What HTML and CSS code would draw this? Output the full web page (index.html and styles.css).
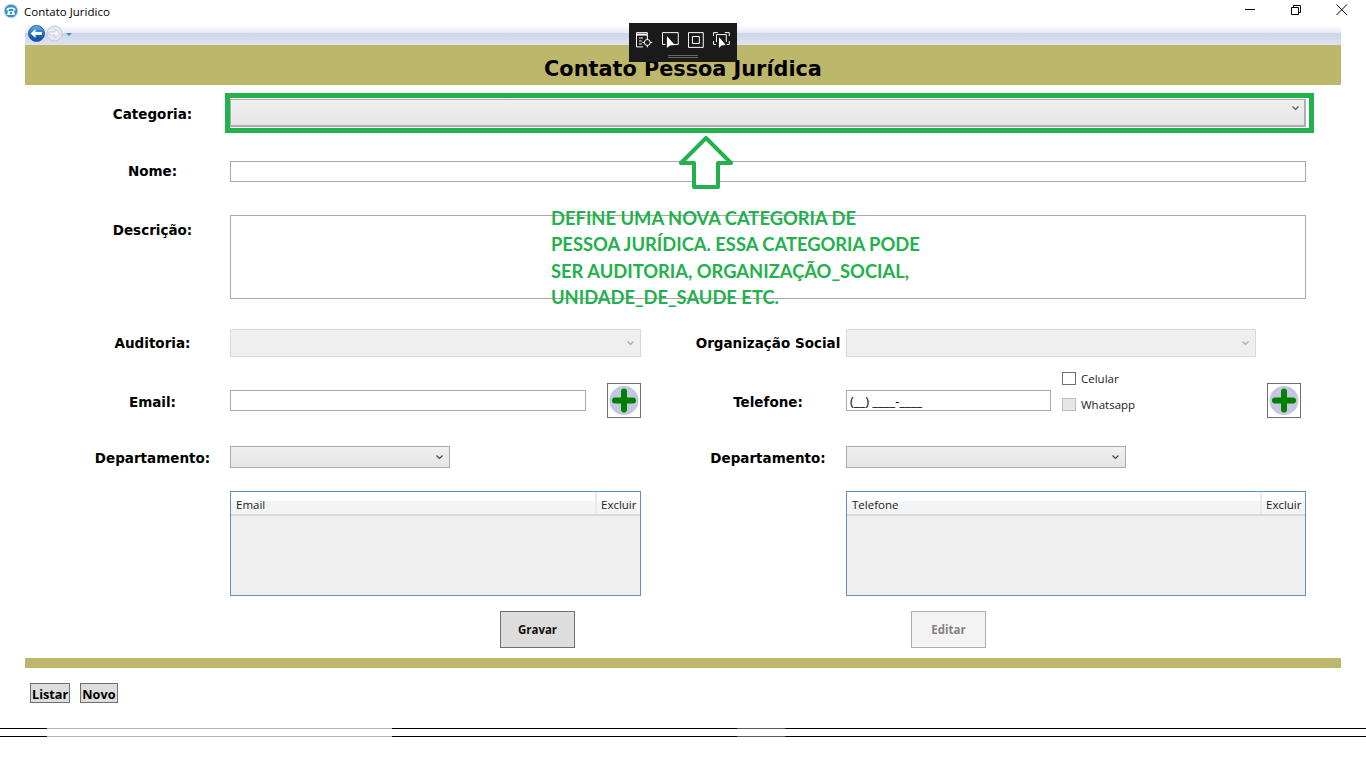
FILE: index.html
```html
<!DOCTYPE html>
<html lang="pt-BR">

<head>
    <meta charset="UTF-8">
    <title>Contato Juridico</title>
    <link rel="stylesheet" href="styles.css">
</head>

<body>
    <div class="titlebar">
        <svg class="app-icon" width="16" height="16" viewBox="0 0 16 16">
            <circle cx="8" cy="8" r="7.5" fill="#d5dde4"/>
            <circle cx="8" cy="8" r="6.3" fill="#2b8fd0"/>
            <path d="M3.5 6.5C4 3.5 12 3.5 12.5 6.5V7.5H10V6H6V7.500H3.500Z" fill="#fff"/>
            <path d="M5 8H11L12 12H4Z" fill="#fff"/>
            <circle cx="8" cy="10" r="1.200" fill="#2b8fd0"/>
        </svg>
        <span class="app-title">Contato Juridico</span>
        <div class="win-buttons">
            <svg width="12" height="12" viewBox="0 0 12 12"><path d="M1 5.500H11" stroke="#000" fill="none"/></svg>
            <svg width="12" height="12" viewBox="0 0 12 12"><path d="M1.500 3.500H8.500V10.500H1.500ZM3.500 3.500V1.500H10.500V8.500H8.500" stroke="#000" fill="none"/></svg>
            <svg width="12" height="12" viewBox="0 0 12 12"><path d="M0.500 0.500L11 11M11 0.500L0.500 11" stroke="#000" fill="none"/></svg>
        </div>
    </div>

    <div class="page">
        <div class="navbar">
            <svg width="48" height="20" viewBox="0 0 48 20">
                <defs>
                    <linearGradient id="backFill" x1="0" y1="0" x2="0" y2="1">
                        <stop offset="0" stop-color="#6bb5ea"/>
                        <stop offset="0.5" stop-color="#1c6fc4"/>
                        <stop offset="1" stop-color="#0a4fa0"/>
                    </linearGradient>
                </defs>
                <circle cx="10.500" cy="8.500" r="8" fill="url(#backFill)" stroke="#2a5f9c"/>
                <path d="M4.500 8.500L9.500 4V7H16V10H9.500V13Z" fill="#fff"/>
                <circle cx="28.500" cy="8.500" r="7.500" fill="#e6e9f2" stroke="#c3c9dc"/>
                <path d="M34 8.500L29 4V7H23V10H29V13Z" fill="#f4f5fa" stroke="#b9c0d4" stroke-width="0.600"/>
                <path d="M40 8H46L43 11Z" fill="#3d8fc4"/>
            </svg>
        </div>

        <h1 class="banner">Contato Pessoa Jurídica</h1>

        <form class="contact-form">
            <div class="row row-categoria">
                <label class="field-label">Categoria:</label>
                <div class="combo combo-main span-all">
                    <svg class="chevron" width="7" height="5" viewBox="0 0 7 5"><path d="M0.500 0.500L3.500 3.500L6.500 0.500" fill="none" stroke="#555" stroke-width="1.200"/></svg>
                </div>
            </div>

            <div class="row row-nome">
                <label class="field-label">Nome:</label>
                <input class="text-input span-all" type="text">
            </div>

            <div class="row row-descricao">
                <label class="field-label label-top">Descrição:</label>
                <textarea class="text-area span-all"></textarea>
            </div>

            <div class="row row-auditoria">
                <label class="field-label">Auditoria:</label>
                <div class="combo combo-off">
                    <svg class="chevron" width="7" height="5" viewBox="0 0 7 5"><path d="M0.500 0.500L3.500 3.500L6.500 0.500" fill="none" stroke="#aaa" stroke-width="1.200"/></svg>
                </div>
                <label class="field-label side-label">Organização Social</label>
                <div class="combo combo-off combo-org">
                    <svg class="chevron" width="7" height="5" viewBox="0 0 7 5"><path d="M0.500 0.500L3.500 3.500L6.500 0.500" fill="none" stroke="#aaa" stroke-width="1.200"/></svg>
                </div>
            </div>

            <div class="row row-contato">
                <label class="field-label label-contato">Email:</label>
                <div class="contact-cell">
                    <input class="text-input email-input" type="text">
                    <button class="add-btn add-email" type="button">
                        <svg width="32" height="33" viewBox="0 0 32 33">
                            <circle cx="16" cy="16.500" r="14.500" fill="#c6c6e2"/>
                            <path d="M7 16.500H25M16 7.500V25.500" stroke="#008000" stroke-width="6" stroke-linecap="round"/>
                        </svg>
                    </button>
                </div>
                <label class="field-label side-label label-contato">Telefone:</label>
                <div class="contact-cell">
                    <input class="text-input phone-input" type="text" value="(__) ____-____">
                    <div class="phone-checks">
                        <label class="check-line"><input class="check" type="checkbox">Celular</label>
                        <label class="check-line"><input class="check check-off" type="checkbox">Whatsapp</label>
                    </div>
                    <button class="add-btn add-phone" type="button">
                        <svg width="32" height="33" viewBox="0 0 32 33">
                            <circle cx="16" cy="16.500" r="14.500" fill="#c6c6e2"/>
                            <path d="M7 16.500H25M16 7.500V25.500" stroke="#008000" stroke-width="6" stroke-linecap="round"/>
                        </svg>
                    </button>
                </div>
            </div>

            <div class="row row-depto">
                <label class="field-label">Departamento:</label>
                <div class="combo combo-depto-left">
                    <svg class="chevron" width="7" height="5" viewBox="0 0 7 5"><path d="M0.500 0.500L3.500 3.500L6.500 0.500" fill="none" stroke="#444" stroke-width="1.200"/></svg>
                </div>
                <label class="field-label side-label">Departamento:</label>
                <div class="combo combo-depto-right">
                    <svg class="chevron" width="7" height="5" viewBox="0 0 7 5"><path d="M0.500 0.500L3.500 3.500L6.500 0.500" fill="none" stroke="#444" stroke-width="1.200"/></svg>
                </div>
            </div>

            <div class="row row-listas">
                <div class="list-box col-left">
                    <div class="list-head">
                        <span class="list-col">Email</span>
                        <span class="list-del">Excluir</span>
                    </div>
                </div>
                <div class="list-box col-right">
                    <div class="list-head">
                        <span class="list-col">Telefone</span>
                        <span class="list-del">Excluir</span>
                    </div>
                </div>
            </div>

            <div class="row row-acoes">
                <div class="col-left">
                    <button class="action-btn btn-gravar" type="button">Gravar</button>
                </div>
                <div class="col-right">
                    <button class="action-btn btn-editar" type="button" disabled>Editar</button>
                </div>
            </div>
        </form>

        <div class="footer-band"></div>

        <div class="page-links">
            <button class="link-btn" type="button">Listar</button>
            <button class="link-btn" type="button">Novo</button>
        </div>
    </div>

    <div class="double-line"></div>

    <!-- coisas desenhadas por cima da tela -->
    <div class="capture-bar">
        <div class="capture-icons">
            <svg width="17" height="16" viewBox="0 0 17 16" fill="none" stroke="#fff">
                <path d="M0.500 15V0.500H11.500V6"/>
                <path d="M0.500 2.500H11.500" stroke-width="2"/>
                <path d="M3 6H7M3 9H6M3 12H6M0.500 15H7"/>
                <circle cx="11.500" cy="10.500" r="3"/>
                <path d="M11.500 5.500V8M11.500 13V15.500M6.500 10.500H9M14 10.500H16.500"/>
            </svg>
            <svg width="17" height="16" viewBox="0 0 17 16" fill="none" stroke="#fff">
                <path d="M3.500 12.500H0.500V0.500H16.500V12.500H12"/>
                <path d="M5 4L5 16L8 13.500L13 13L5 4Z" fill="#fff" stroke="none"/>
            </svg>
            <svg width="17" height="16" viewBox="0 0 17 16" fill="none" stroke="#fff">
                <path d="M0.500 0.500H15.500V15.500H0.500Z"/>
                <path d="M4.500 4.500H11.500V11.500H4.500Z"/>
            </svg>
            <svg width="17" height="16" viewBox="0 0 17 16" fill="none" stroke="#fff">
                <path d="M0.500 4V0.500H5M12 0.500H16.500V4M0.500 9V12.500H3M16.500 9V12.500H14"/>
                <path d="M3.500 10V2.500H13.500V10"/>
                <path d="M6 5L6 16L8.500 13.500L13 13L6 5Z" fill="#fff" stroke="none"/>
            </svg>
        </div>
        <div class="capture-grip"></div>
    </div>

    <div class="note-box"></div>
    <svg class="note-arrow" width="54" height="54" viewBox="0 0 54 54">
        <path d="M27 2L2 27H15V51H39V27H52Z" fill="#fff" stroke="#22b14c" stroke-width="4" stroke-linejoin="round"/>
    </svg>
    <p class="note-text">DEFINE UMA NOVA CATEGORIA DE<br>PESSOA JURÍDICA. ESSA CATEGORIA PODE<br>SER AUDITORIA, ORGANIZAÇÃO_SOCIAL,<br>UNIDADE_DE_SAUDE ETC.</p>
</body>

</html>
```

FILE: styles.css
```css
* {
    box-sizing: border-box;
}

html, body {
    height: 100%;
}

body {
    margin: 0;
    background: #fff;
    color: #000;
    font-family: "Open Sans", "Noto Sans", sans-serif;
    overflow: hidden;
}

.titlebar {
    height: 25px;
    display: flex;
    align-items: center;
    padding-left: 3px;
}

.app-icon {
    margin-top: -3px;
}

.app-title {
    margin-left: 5px;
    margin-top: -3px;
    font-size: 11.5px;
}

.win-buttons {
    margin-left: auto;
    margin-top: -5px;
    display: flex;
    gap: 34px;
    padding-right: 18px;
}

.page {
    margin: 0 25px;
    width: 1316px;
}

.navbar {
    height: 20px;
    padding-left: 1px;
    background: linear-gradient(to bottom, #fff 0, #e6e9f4 40%, #cdd5e9 42%, #dfe3f0 100%);
}

.navbar svg {
    display: block;
}

.banner {
    margin: 0;
    height: 40px;
    line-height: 48px;
    text-align: center;
    background: #bdb76b;
    font-family: "Comic Sans MS", "DejaVu Sans", sans-serif;
    font-size: 20.8px;
    font-weight: bold;
}

.contact-form {
    padding: 14px 0 0 50px;
}

.row {
    display: grid;
    grid-template-columns: 155px 411px 49px 156px 460px;
}

.row-categoria { height: 28px; }
.row-nome { height: 20px; margin-top: 34px; }
.row-descricao { height: 84px; margin-top: 34px; }
.row-auditoria { height: 28px; margin-top: 30px; }
.row-contato { height: 46px; margin-top: 15px; }
.row-depto { height: 22px; margin-top: 28px; }
.row-listas { height: 105px; margin-top: 23px; }
.row-acoes { height: 37px; margin-top: 15px; }

.field-label {
    align-self: center;
    text-align: center;
    white-space: nowrap;
    font-family: "Comic Sans MS", "DejaVu Sans", sans-serif;
    font-size: 13.500px;
    font-weight: bold;
}

.row-categoria .field-label,
.row-depto .field-label {
    padding-top: 2px;
}

.row-nome .field-label {
    padding-bottom: 1px;
}

.label-top {
    align-self: start;
    margin-top: 7px;
}

.label-contato {
    align-self: start;
    margin-top: 22px;
}

.side-label {
    grid-column: 4;
}

.span-all {
    grid-column: 2 / 6;
}

.combo {
    display: flex;
    align-items: center;
    justify-content: flex-end;
    padding-right: 6px;
    border: 1px solid #acacac;
    background: linear-gradient(to bottom, #f0f0f0, #e5e5e5);
}

.combo-main {
    border-width: 1px 2px 2px 1px;
    padding-right: 5px;
    padding-bottom: 8px;
}

.combo-off {
    border-color: #d9d9d9;
    background: #efefef;
}

.combo-org {
    width: 410px;
}

.combo-depto-left {
    width: 220px;
}

.combo-depto-right {
    width: 280px;
}

.text-input,
.text-area {
    display: block;
    margin: 0;
    border: 1px solid #a9a9a9;
    border-radius: 0;
    outline: none;
    background: #fff;
    font-family: "Open Sans", "Noto Sans", sans-serif;
    font-size: 12px;
}

.text-area {
    resize: none;
}

.contact-cell {
    position: relative;
    display: flex;
    align-items: flex-start;
}

.email-input {
    width: 356px;
    height: 21px;
    margin-top: 18px;
}

.phone-input {
    width: 205px;
    height: 21px;
    margin-top: 18px;
    padding: 0 3px;
    font-size: 13px;
}

.phone-checks {
    margin-left: 11px;
}

.check-line {
    display: flex;
    align-items: center;
    height: 13px;
    margin-bottom: 13px;
    font-size: 11.5px;
    color: #222;
}

.check {
    appearance: none;
    width: 14px;
    height: 13px;
    margin: 0 5px 0 0;
    border: 1px solid #707070;
    background: #fff;
}

.check-off {
    border-color: #bcbcbc;
    background: #e6e6e6;
}

.add-btn {
    width: 34px;
    height: 35px;
    margin-top: 11px;
    padding: 0;
    border: 1px solid #707070;
    background: #fff;
}

.add-btn svg {
    display: block;
}

.add-email {
    margin-left: 21px;
}

.add-phone {
    margin-left: auto;
    margin-right: 5px;
}

.col-left {
    grid-column: 2;
}

.col-right {
    grid-column: 5;
}

.list-box {
    border: 1px solid #6590bd;
    background: #efefef;
}

.list-head {
    display: flex;
    height: 24px;
    border-bottom: 2px solid #d5d9e0;
    background: linear-gradient(to bottom, #fff 0, #fff 40%, #f4f5f7 42%, #f2f3f5 100%);
    font-size: 11.5px;
    line-height: 26px;
    color: #222;
}

.list-col {
    flex: 1;
    padding-left: 5px;
    border-right: 2px solid #e8eaee;
}

.list-del {
    width: 43px;
    padding-left: 4px;
}

.action-btn {
    display: block;
    width: 75px;
    height: 37px;
    padding: 0;
    font-family: "Open Sans", "Noto Sans", sans-serif;
    font-size: 11.5px;
    font-weight: bold;
}

.btn-gravar {
    margin-left: 270px;
    border: 1px solid #707070;
    background: #ddd;
    color: #111;
}

.btn-editar {
    margin-left: 65px;
    border: 1px solid #adadad;
    background: #f4f4f4;
    color: #838383;
}

.footer-band {
    height: 10px;
    margin-top: 10px;
    background: #bdb76b;
}

.page-links {
    display: flex;
    gap: 10px;
    margin: 15px 0 0 5px;
}

.link-btn {
    height: 20px;
    padding: 2px 1px 0;
    border: 1px solid #707070;
    background: #ddd;
    font-family: "Open Sans", "Noto Sans", sans-serif;
    font-size: 12.700px;
    font-weight: bold;
    line-height: 16px;
}

.double-line {
    height: 9px;
    margin-top: 25px;
    border-top: 1px solid transparent;
    border-bottom: 1px solid transparent;
    border-image: linear-gradient(to right, #000 48px, #b4b4b4 48px, #b4b4b4 392px, #000 392px, #000 737px, #55585c 737px, #55585c 785px, #000 785px) 1;
}

/* por cima */
.capture-bar {
    position: absolute;
    left: 629px;
    top: 23px;
    width: 108px;
    height: 39px;
    padding: 9px 7px 0;
    background: #1a1a1a;
}

.capture-icons {
    display: flex;
    gap: 9px;
}

.capture-icons svg {
    display: block;
}

.capture-grip {
    width: 30px;
    height: 3px;
    margin: 7px auto 0;
    border-top: 1px solid #666;
    border-bottom: 1px solid #666;
}

.note-box {
    position: absolute;
    left: 225px;
    top: 93px;
    width: 1089px;
    height: 40px;
    border: 5px solid #22b14c;
}

.note-arrow {
    position: absolute;
    left: 679px;
    top: 136px;
}

.note-text {
    position: absolute;
    left: 551px;
    top: 205px;
    margin: 0;
    font-family: Lato, "Open Sans", sans-serif;
    font-size: 18.350px;
    font-weight: bold;
    line-height: 26.300px;
    color: #22b14c;
    white-space: nowrap;
}
```
